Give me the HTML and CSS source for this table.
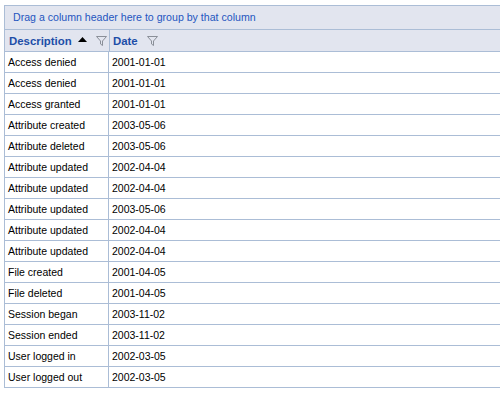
FILE: index.html
```html
<!DOCTYPE html>
<html lang="en">
<head>
<meta charset="UTF-8" />
<title>Events grid</title>
<link rel="stylesheet" href="styles.css">
</head>
<body>

<div class="grid">
    <div class="group-panel">Drag a column header here to group by that column</div>
    <div class="row header">
        <div class="cell col-desc">
            <span class="caption">Description</span>
            <svg class="sort" viewBox="0 0 9 5"><path d="M0 5 L4.5 0 L9 5 Z"/></svg>
            <svg class="filter" viewBox="0 0 11 10"><path d="M0.5 0.5 H10.5 L6.5 5 V9.5 L4.5 8 V5 Z"/></svg>
        </div>
        <div class="cell col-date">
            <span class="caption">Date</span>
            <svg class="filter" viewBox="0 0 11 10"><path d="M0.5 0.5 H10.5 L6.5 5 V9.5 L4.5 8 V5 Z"/></svg>
        </div>
    </div>
    <div class="row"><div class="cell col-desc">Access denied</div><div class="cell col-date">2001-01-01</div></div>
    <div class="row"><div class="cell col-desc">Access denied</div><div class="cell col-date">2001-01-01</div></div>
    <div class="row"><div class="cell col-desc">Access granted</div><div class="cell col-date">2001-01-01</div></div>
    <div class="row"><div class="cell col-desc">Attribute created</div><div class="cell col-date">2003-05-06</div></div>
    <div class="row"><div class="cell col-desc">Attribute deleted</div><div class="cell col-date">2003-05-06</div></div>
    <div class="row"><div class="cell col-desc">Attribute updated</div><div class="cell col-date">2002-04-04</div></div>
    <div class="row"><div class="cell col-desc">Attribute updated</div><div class="cell col-date">2002-04-04</div></div>
    <div class="row"><div class="cell col-desc">Attribute updated</div><div class="cell col-date">2003-05-06</div></div>
    <div class="row"><div class="cell col-desc">Attribute updated</div><div class="cell col-date">2002-04-04</div></div>
    <div class="row"><div class="cell col-desc">Attribute updated</div><div class="cell col-date">2002-04-04</div></div>
    <div class="row"><div class="cell col-desc">File created</div><div class="cell col-date">2001-04-05</div></div>
    <div class="row"><div class="cell col-desc">File deleted</div><div class="cell col-date">2001-04-05</div></div>
    <div class="row"><div class="cell col-desc">Session began</div><div class="cell col-date">2003-11-02</div></div>
    <div class="row"><div class="cell col-desc">Session ended</div><div class="cell col-date">2003-11-02</div></div>
    <div class="row"><div class="cell col-desc">User logged in</div><div class="cell col-date">2002-03-05</div></div>
    <div class="row"><div class="cell col-desc">User logged out</div><div class="cell col-date">2002-03-05</div></div>
</div>

</body>
</html>
```

FILE: styles.css
```css
body {
    margin: 0;
    background: #fff;
    font-family: "Liberation Sans", Arial, sans-serif;
    font-size: 10.5px;
    color: #000;
    overflow: hidden;
}

.grid {
    margin: 5px 0 0 4px;
    border-left: 1px solid #abbdd6;
    border-top: 1px solid #abbdd6;
}

.group-panel {
    height: 23px;
    line-height: 23px;
    padding-left: 8px;
    background: #e2e5ef;
    color: #1f55c0;
    font-size: 10.6px;
    border-bottom: 1px solid #abbdd6;
}

.row {
    display: flex;
    height: 20px;
    border-bottom: 1px solid #abbdd6;
}

.cell {
    display: flex;
    align-items: center;
    padding-left: 3px;
    white-space: nowrap;
}

.col-desc {
    width: 100px;
    border-right: 1px solid #abbdd6;
}

.col-date {
    flex: 1;
}

.header {
    height: 21px;
    background: #e2e5ef;
}

.header .cell {
    padding-left: 4px;
}

.header .col-date {
    padding-left: 3px;
}

.caption {
    font-size: 11.4px;
    font-weight: bold;
    color: #1d4ea8;
}

.sort {
    width: 9px;
    height: 5px;
    margin-left: 6px;
    margin-bottom: 2px;
    fill: #000;
}

.filter {
    width: 11px;
    height: 10px;
    fill: none;
    stroke: #8a8f98;
    stroke-width: 1;
}

.col-desc .filter {
    margin-left: auto;
    margin-right: 2px;
}

.col-date .filter {
    margin-left: 9px;
}
```
